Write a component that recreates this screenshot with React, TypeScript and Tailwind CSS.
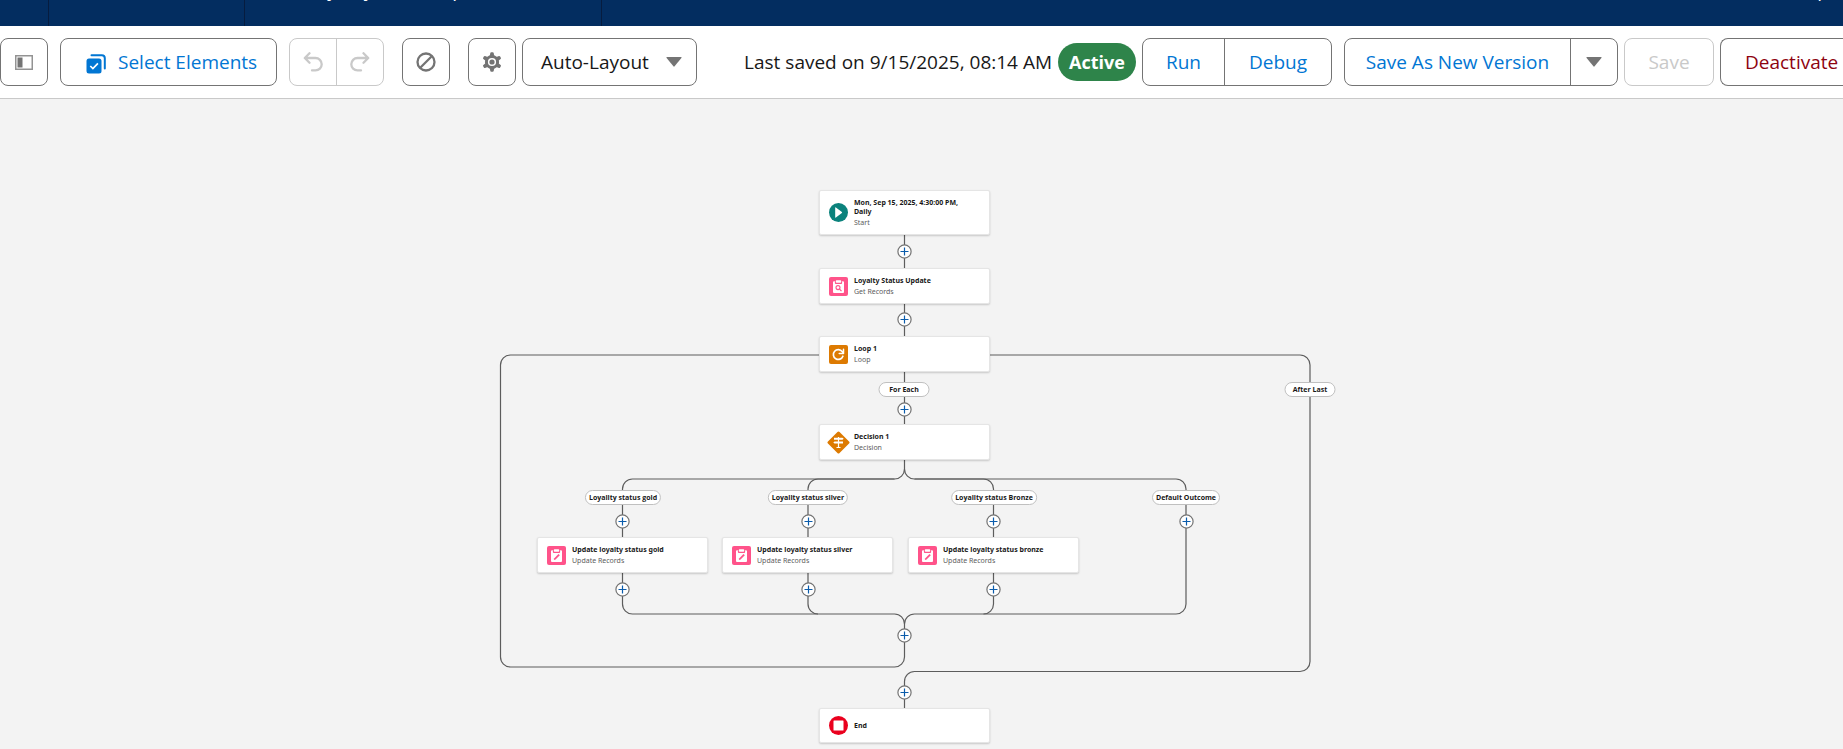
import { ReactNode } from "react";

const outline = "border border-[#747474] bg-white rounded-lg";
const iconButton = "flex h-12 w-12 shrink-0 items-center justify-center text-[#747474]";

function Caret() {
  return (
    <svg width="16" height="10" viewBox="0 0 16 10" aria-hidden="true">
      <path d="M1 0h14q1 0 .4 1L8.6 9.300q-.6.7-1.200 0L.6 1Q0 0 1 0z" fill="#747474" />
    </svg>
  );
}

function UndoIcon({ flip = false }: { flip?: boolean }) {
  return (
    <svg width="20" height="20" viewBox="0 0 20 20" fill="none" stroke="#c9c9c9" strokeWidth="2.300" strokeLinecap="round" strokeLinejoin="round" className={flip ? "-scale-x-100" : ""} aria-hidden="true">
      <path d="M6.500 1.200 1.800 6l4.700 4.700M2 6h10.500a6.200 6.200 0 0 1 0 12.400H9" />
    </svg>
  );
}

function SelectIcon() {
  return (
    <svg width="20" height="24" viewBox="0 -4 20 24" aria-hidden="true">
      <path d="M5.500 1.200h10.300a3 3 0 0 1 3 3v10.300" fill="none" stroke="#0176d3" strokeWidth="2" strokeLinecap="round" />
      <rect x="0.500" y="4.500" width="15" height="15" rx="2.500" fill="#0176d3" />
      <path d="m4.300 12 2.600 2.600 5-5.200" fill="none" stroke="#fff" strokeWidth="1.700" />
    </svg>
  );
}

function GearIcon() {
  return (
    <svg width="20" height="20" viewBox="0 0 20 20" aria-hidden="true">
      <circle cx="10" cy="10" r="5.600" fill="none" stroke="#747474" strokeWidth="3" />
      {[0, 60, 120, 180, 240, 300].map((a) => (
        <path key={a} d="M7.600 5 8.300 1q.2-.8 1-.8h1.400q.8 0 1 .8l.7 4z" fill="#747474" transform={`rotate(${a} 10 10)`} />
      ))}
      <circle cx="10" cy="10" r="2.600" fill="#747474" />
    </svg>
  );
}

type Kind = "start" | "get" | "loop" | "decision" | "update" | "end";

function Clipboard({ children }: { children: ReactNode }) {
  return (
    <>
      <rect width="19" height="19" rx="2" fill="#ff538a" />
      <rect x="4" y="5" width="11" height="11" rx="1" fill="#fff" />
      <path d="M4 6.500V5.200q0-1 1-1h1v1.600q0 .8.800.8h5.400q.8 0 .8-.8V4.200h1q1 0 1 1v1.300" fill="#fff" />
      <path d="M5.900 4v2q0 1 1 1h5.200q1 0 1-1V4z" fill="#ff538a" />
      <rect x="6.800" y="3.200" width="5.400" height="2.500" rx="0.700" fill="#fff" />
      {children}
    </>
  );
}

function NodeIcon({ kind }: { kind: Kind }) {
  if (kind === "decision") {
    return (
      <svg width="23" height="23" viewBox="0 0 23 23" className="-mx-0.5 shrink-0" aria-hidden="true">
        <rect x="3.300" y="3.300" width="16.400" height="16.400" rx="1.500" fill="#dd7a01" transform="rotate(45 11.500 11.500)" />
        <path d="M11.500 6v10M9.500 16.500h4" stroke="#fff" strokeWidth="1.200" />
        <path d="M7 6.800h8.500l1.200 1-1.200 1H7zM16 10.400H7.500l-1.200 1 1.200 1H16z" fill="#fff" />
      </svg>
    );
  }
  return (
    <svg width="19" height="19" viewBox="0 0 19 19" className="shrink-0" aria-hidden="true">
      {kind === "start" && (
        <>
          <circle cx="9.500" cy="9.500" r="9.500" fill="#0b827c" />
          <path d="M6.200 4.800q0-.8.700-.4l6 4.500q.5.600 0 1.100l-6 4.600q-.7.400-.7-.4z" fill="#fff" />
        </>
      )}
      {kind === "get" && (
        <Clipboard>
          <circle cx="9" cy="10.600" r="2" fill="none" stroke="#ff538a" strokeWidth="1.100" />
          <path d="m10.500 12.100 2 2" stroke="#ff538a" strokeWidth="1.200" />
        </Clipboard>
      )}
      {kind === "update" && (
        <Clipboard>
          <path d="m6.800 14 .5-1.800 4.200-4.200 1.300 1.300-4.200 4.200z" fill="#ff538a" />
        </Clipboard>
      )}
      {kind === "loop" && (
        <>
          <rect width="19" height="19" rx="2" fill="#dd7a01" />
          <path d="M13.900 11.200a4.900 4.900 0 1 1-.7-4.600l.9 1.200" fill="none" stroke="#fff" strokeWidth="1.700" strokeLinecap="round" />
          <path d="M14.500 4.200v4.300h-4.300" fill="none" stroke="#fff" strokeWidth="1.500" strokeLinecap="round" strokeLinejoin="round" />
        </>
      )}
      {kind === "end" && (
        <>
          <circle cx="9.500" cy="9.500" r="9.500" fill="#ea001e" />
          <rect x="4.500" y="4.500" width="10" height="10" rx="0.500" fill="#fff" />
        </>
      )}
    </svg>
  );
}

const nodes: { kind: Kind; title: string; sub?: string; place: string }[] = [
  { kind: "start", title: "Mon, Sep 15, 2025, 4:30:00 PM, Daily", sub: "Start", place: "left-[819px] top-[91px] h-[45px]" },
  { kind: "get", title: "Loyalty Status Update", sub: "Get Records", place: "left-[819px] top-[169px] h-[36px]" },
  { kind: "loop", title: "Loop 1", sub: "Loop", place: "left-[819px] top-[237px] h-[36px]" },
  { kind: "decision", title: "Decision 1", sub: "Decision", place: "left-[819px] top-[325px] h-[36px]" },
  { kind: "update", title: "Update loyalty status gold", sub: "Update Records", place: "left-[537px] top-[438px] h-[36px]" },
  { kind: "update", title: "Update loyalty status silver", sub: "Update Records", place: "left-[722px] top-[438px] h-[36px]" },
  { kind: "update", title: "Update loyalty status bronze", sub: "Update Records", place: "left-[908px] top-[438px] h-[36px]" },
  { kind: "end", title: "End", place: "left-[819px] top-[609px] h-[35px]" },
];

const labels: { text: string; place: string }[] = [
  { text: "For Each", place: "left-[904px] top-[283px] min-w-[51px]" },
  { text: "After Last", place: "left-[1310px] top-[283px] min-w-[51px]" },
  { text: "Loyality status gold", place: "left-[623px] top-[391px]" },
  { text: "Loyality status silver", place: "left-[808px] top-[391px]" },
  { text: "Loyality status Bronze", place: "left-[994px] top-[391px]" },
  { text: "Default Outcome", place: "left-[1186px] top-[391px]" },
];

const adders = [
  "left-[897px] top-[145px]",
  "left-[897px] top-[213px]",
  "left-[897px] top-[303px]",
  "left-[615px] top-[415px]",
  "left-[801px] top-[415px]",
  "left-[986px] top-[415px]",
  "left-[1179px] top-[415px]",
  "left-[615px] top-[483px]",
  "left-[801px] top-[483px]",
  "left-[986px] top-[483px]",
  "left-[897px] top-[529px]",
  "left-[897px] top-[586px]",
];

const connectors = [
  "M904.500 136V237M904.500 273V325",
  "M819 256H510.500a10 10 0 0 0-10 10V558a10 10 0 0 0 10 10H894.500a10 10 0 0 0 10-10V525",
  "M990 256H1300a10 10 0 0 1 10 10V562.500a10 10 0 0 1-10 10H914.500a10 10 0 0 0-10 10V609",
  "M904.500 361V370a10 10 0 0 1-10 10H632.500a10 10 0 0 0-10 10V505a10 10 0 0 0 10 10H894.500a10 10 0 0 1 10 10",
  "M894.500 380H818a10 10 0 0 0-10 10V505a10 10 0 0 0 10 10",
  "M904.500 370a10 10 0 0 0 10 10H1176a10 10 0 0 1 10 10V505a10 10 0 0 1-10 10H914.500a10 10 0 0 0-10 10",
  "M914.500 380H983.500a10 10 0 0 1 10 10V505a10 10 0 0 1-10 10",
];

export default function App() {
  return (
    <div className="flex min-h-screen flex-col overflow-hidden bg-[#f3f3f3] font-['Open_Sans','Noto_Sans',sans-serif] text-[#181818]">
      <header className="flex h-[26px] shrink-0 overflow-hidden bg-[#032d60] text-[19px] leading-6 text-white">
        <div className="w-[49px] border-r border-[#061c3f]" />
        <div className="w-[196px] border-r border-[#061c3f]" />
        <div className="w-[357px] border-r border-[#061c3f] pl-[61px]">
          <div className="-mt-[22px]">Loyality Status Update</div>
        </div>
        <div className="ml-auto pr-3.5">
          <div className="-mt-[22px]">Help</div>
        </div>
      </header>

      <div className="flex shrink-0 items-center border-b border-[#c9c9c9] bg-white py-3 text-[19px] leading-6">
        <button aria-label="Toggle Toolbox" className={`${outline} ${iconButton}`}>
          <svg width="18" height="15" viewBox="0 0 18 15" aria-hidden="true">
            <rect x="0.750" y="0.750" width="16.500" height="13.500" fill="none" stroke="#939393" strokeWidth="1.500" />
            <rect x="2.500" y="2.500" width="5" height="10" fill="#747474" />
          </svg>
        </button>
        <button className={`${outline} ml-3 flex h-12 w-[217px] shrink-0 items-center gap-3 pl-[25px] text-[#0176d3]`}>
          <SelectIcon />
          Select Elements
        </button>
        <div className="ml-3 flex h-12 w-[95px] shrink-0 overflow-hidden rounded-lg border border-[#c9c9c9]">
          <button disabled aria-label="Undo" className="flex flex-1 items-center justify-center border-r border-[#c9c9c9]">
            <UndoIcon />
          </button>
          <button disabled aria-label="Redo" className="flex flex-1 items-center justify-center">
            <UndoIcon flip />
          </button>
        </div>
        <button aria-label="Show Errors" className={`${outline} ${iconButton} ml-[18px]`}>
          <svg width="20" height="20" viewBox="0 0 20 20" fill="none" stroke="#747474" strokeWidth="2.300" aria-hidden="true">
            <circle cx="10" cy="10" r="8.500" />
            <path d="M16 4 4 16" />
          </svg>
        </button>
        <button aria-label="View Properties" className={`${outline} ${iconButton} ml-[18px]`}>
          <GearIcon />
        </button>
        <button className={`${outline} ml-1.5 flex h-12 w-[175px] shrink-0 items-center justify-between pl-[18px] pr-3.5`}>
          Auto-Layout
          <Caret />
        </button>

        <div className="ml-auto flex shrink-0 items-center gap-1.5">
          <span className="whitespace-nowrap">Last saved on 9/15/2025, 08:14 AM</span>
          <span className="flex h-[38px] w-[78px] items-center justify-center rounded-full bg-[#2e844a] text-[18px] font-bold text-white">Active</span>
          <div className={`${outline} flex h-12 overflow-hidden text-[#0176d3]`}>
            <button className="w-[82px] border-r border-[#747474]">Run</button>
            <button className="w-[106px]">Debug</button>
          </div>
          <div className={`${outline} ml-1.5 flex h-12 overflow-hidden text-[#0176d3]`}>
            <button className="w-[226px] border-r border-[#747474]">Save As New Version</button>
            <button aria-label="More save options" className="flex w-[46px] items-center justify-center">
              <Caret />
            </button>
          </div>
          <button disabled className="h-12 w-[90px] rounded-lg border border-[#c9c9c9] text-[#c9c9c9]">
            Save
          </button>
          <button className="h-12 w-[123px] rounded-l-lg border border-r-0 border-[#747474] pl-6 text-left text-[#8e030f]">Deactivate</button>
        </div>
      </div>

      <main className="relative min-h-[650px] flex-1">
        <svg width="1843" height="650" viewBox="0 0 1843 650" className="absolute left-0 top-0" fill="none" stroke="#5c5c5c" strokeWidth="1.200" aria-hidden="true">
          {connectors.map((d) => (
            <path key={d} d={d} />
          ))}
        </svg>
        {nodes.map((n) => (
          <div key={n.title} className={`absolute flex w-[171px] items-center gap-1.5 rounded-xs border border-[#e5e5e5] bg-white pl-[9px] pr-3 shadow-[0_1px_2px_rgba(0,0,0,0.18)] ${n.place}`}>
            <NodeIcon kind={n.kind} />
            <div className="flex flex-col gap-0.5 font-['Noto_Sans',sans-serif] text-[7px] leading-[9px]">
              <div className="font-bold">{n.title}</div>
              {n.sub && <div className="text-[#5c5c5c]">{n.sub}</div>}
            </div>
          </div>
        ))}
        {labels.map((l) => (
          <div key={l.text} className={`absolute flex h-[15px] -translate-x-1/2 items-center justify-center whitespace-nowrap rounded-full border border-[#c0c0c0] bg-white px-[3px] text-[7px] font-bold leading-[9px] ${l.place}`}>
            {l.text}
          </div>
        ))}
        {adders.map((place) => (
          <button key={place} aria-label="Add Element" className={`absolute ${place}`}>
            <svg width="15" height="15" viewBox="0 0 15 15" aria-hidden="true">
              <circle cx="7.500" cy="7.500" r="6.600" fill="#fff" stroke="#747474" strokeWidth="1.200" />
              <path d="M7.500 3.500v8M3.500 7.500h8" stroke="#0b5cab" strokeWidth="1.200" />
            </svg>
          </button>
        ))}
      </main>
    </div>
  );
}
